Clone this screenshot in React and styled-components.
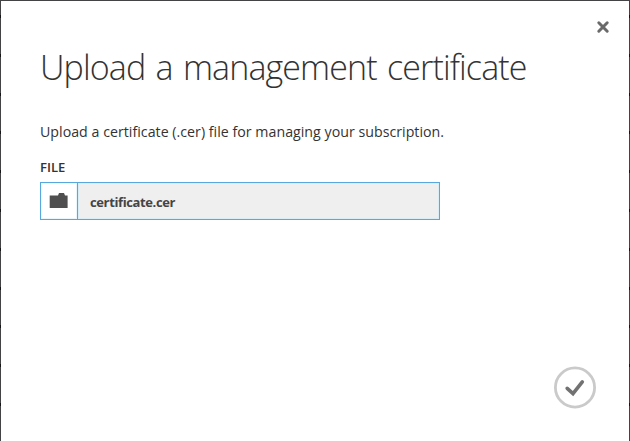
import React from "react";
import styled, { createGlobalStyle } from "styled-components";

const GlobalStyle = createGlobalStyle`
  *, *::before, *::after { box-sizing: border-box; }
  body { margin: 0; overflow: hidden; background: #403f42; }
`;

const Backdrop = styled.div`
  height: 441px;
  padding: 1px 1px 0;
  background: repeating-linear-gradient(
    to bottom,
    #434245 0 15px,
    #151515 15px 18px,
    #434245 18px 38.8px
  );
  font-family: "Open Sans", "Noto Sans", sans-serif;
  color: #333;
`;

const Dialog = styled.section`
  display: flex;
  flex-direction: column;
  height: 440px;
  padding: 18px 33px 32px 39px;
  background: #fff;
  box-shadow: 0 -1px 0 #434245;
`;

const CloseButton = styled.button`
  display: flex;
  align-self: flex-end;
  margin-right: -15px;
  padding: 0;
  border: 0;
  background: none;
`;

const Title = styled.h1`
  margin: 7px 0 0;
  height: 50px;
  font-size: 34px;
  font-weight: 300;
  line-height: 50px;
  letter-spacing: -0.88px;
  word-spacing: 2.3px;
  white-space: nowrap;
`;

const Description = styled.p`
  margin: 30px 0 0;
  font-size: 14.2px;
  line-height: 20px;
  letter-spacing: 0.02px;
  white-space: nowrap;
`;

const Label = styled.label`
  margin-top: 15px;
  font-size: 13px;
  font-weight: 600;
  line-height: 20px;
`;

const FilePicker = styled.div`
  display: flex;
  width: 400px;
  height: 38px;
  margin-top: 5px;
  border: 1px solid #59a8dd;
`;

const BrowseButton = styled.button`
  display: flex;
  width: 37px;
  padding: 9px 0 0 8px;
  border: 0;
  border-right: 1px solid #59a8dd;
  background: #fff;
  box-shadow: inset 0 0 0 1px #e9f7fd;
`;

const FileName = styled.span`
  flex: 1;
  padding-left: 12px;
  background: #efefef;
  box-shadow: inset 0 0 0 1px #d9edf7;
  font-size: 13px;
  font-weight: 700;
  line-height: 38px;
  letter-spacing: -0.38px;
  color: #444;
`;

const ConfirmButton = styled.button`
  display: flex;
  align-self: flex-end;
  margin-top: auto;
  padding: 0;
  border: 0;
  background: none;
`;

export default function App() {
  return (
    <>
      <GlobalStyle />
      <Backdrop>
        <Dialog>
          <CloseButton aria-label="Close">
            <svg width="16" height="16" viewBox="0 0 16 16">
              <path d="M3.8 3.8 12.2 12.2M12.2 3.8 3.8 12.2" fill="none" stroke="#6a6a6a" strokeWidth="3" strokeLinecap="round" />
            </svg>
          </CloseButton>
          <Title>Upload a management certificate</Title>
          <Description>Upload a certificate (.cer) file for managing your subscription.</Description>
          <Label>FILE</Label>
          <FilePicker>
            <BrowseButton aria-label="Browse">
              <svg width="20" height="17" viewBox="0 0 20 17">
                <path d="M.7 3.5H9L10 1h5l1 2.5h2.6V16H.7z" fill="#4f4f4f" />
              </svg>
            </BrowseButton>
            <FileName>certificate.cer</FileName>
          </FilePicker>
          <ConfirmButton aria-label="Confirm">
            <svg width="42" height="43" viewBox="0 0 42 43">
              <circle cx="21" cy="21.5" r="19.6" fill="#fff" stroke="#cacaca" strokeWidth="2.8" />
              <path d="M13.2 22.3 19 27.6 28.3 15.8" fill="none" stroke="#727272" strokeWidth="3.6" strokeLinecap="round" />
            </svg>
          </ConfirmButton>
        </Dialog>
      </Backdrop>
    </>
  );
}
